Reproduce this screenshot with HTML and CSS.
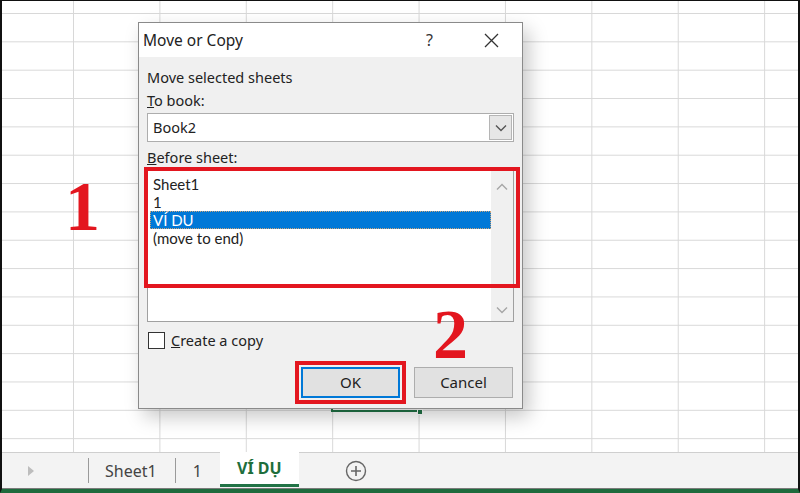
FILE: index.html
```html
<!DOCTYPE html>
<html lang="vi">

<head>
    <meta charset="UTF-8">
    <meta name="viewport" content="width=device-width, initial-scale=1.0">
    <title>Move or Copy</title>
    <link rel="stylesheet" href="styles.css">
</head>

<body>
    <div class="excel">
        <div class="grid">
            <!-- selected cell, mostly hidden under the dialog -->
            <div class="cell-sel"><span class="fill-handle"></span></div>

            <div class="dialog">
                <div class="dlg-title">
                    <span class="dlg-name">Move or Copy</span>
                    <span class="dlg-help">?</span>
                    <span class="dlg-close">
                        <svg width="15" height="15" viewBox="0 0 15 15">
                            <path d="M1 1 L14 14 M14 1 L1 14" stroke="#333" stroke-width="1.3" fill="none"/>
                        </svg>
                    </span>
                </div>
                <div class="dlg-body">
                    <div class="lbl">Move selected sheets</div>
                    <div class="lbl lbl-2"><u>T</u>o book:</div>
                    <div class="combo">
                        <span class="combo-val">Book2</span>
                        <span class="combo-btn">
                            <svg width="12" height="8" viewBox="0 0 12 8">
                                <polyline points="1,1.5 6,6.5 11,1.5" stroke="#555" stroke-width="1.4" fill="none"/>
                            </svg>
                        </span>
                    </div>
                    <div class="lbl lbl-3"><u>B</u>efore sheet:</div>
                    <div class="listbox">
                        <ul class="items">
                            <li>Sheet1</li>
                            <li>1</li>
                            <li class="sel">VÍ DU</li>
                            <li>(move to end)</li>
                        </ul>
                        <div class="vscroll">
                            <svg width="12" height="8" viewBox="0 0 12 8">
                                <polyline points="1,6.5 6,1.5 11,6.5" stroke="#a6a6a6" stroke-width="1.4" fill="none"/>
                            </svg>
                            <svg width="12" height="8" viewBox="0 0 12 8">
                                <polyline points="1,1.5 6,6.5 11,1.5" stroke="#a6a6a6" stroke-width="1.4" fill="none"/>
                            </svg>
                        </div>
                    </div>
                    <label class="check">
                        <span class="box"></span>
                        <span><u>C</u>reate a copy</span>
                    </label>
                    <div class="buttons">
                        <a class="btn btn-ok" href="javascript:;">OK</a>
                        <a class="btn" href="javascript:;">Cancel</a>
                    </div>
                </div>
            </div>

            <!-- red annotations -->
            <div class="frame-list"></div>
            <div class="mark mark-1">1</div>
            <div class="mark mark-2">2</div>
        </div>

        <div class="tabs">
            <div class="tab-nav">
                <svg width="6" height="10" viewBox="0 0 6 10">
                    <polygon points="0,0 6,5 0,10" fill="#bdbdbd"/>
                </svg>
            </div>
            <span class="sep"></span>
            <span class="tab">Sheet1</span>
            <span class="sep"></span>
            <span class="tab tab-one">1</span>
            <span class="tab active">VÍ DỤ</span>
            <span class="tab-add">
                <svg width="22" height="22" viewBox="0 0 22 22">
                    <circle cx="11" cy="11" r="9.5" stroke="#666" stroke-width="1.4" fill="none"/>
                    <path d="M11 6 V16 M6 11 H16" stroke="#666" stroke-width="1.6"/>
                </svg>
            </span>
        </div>
    </div>
</body>

</html>
```

FILE: styles.css
```css
* {
    margin: 0;
    padding: 0;
    box-sizing: border-box;
}

body {
    font-family: "Noto Sans", "Liberation Sans", sans-serif;
    color: #222;
    background: #fff;
}

a {
    text-decoration: none;
    color: #222;
}

ul {
    list-style: none;
}

.excel {
    width: 800px;
    height: 493px;
    border-top: 1px solid #111;
    border-left: 2px solid #111;
    border-right: 2px solid #111;
    border-bottom: 4px solid #1f6b3d;
    overflow: hidden;
}

/* sheet cells */
.grid {
    position: relative;
    height: 451px;
    background-color: #fff;
    background-image: linear-gradient(to right, #d8d8d8 1px, transparent 1px),
        linear-gradient(to bottom, #d8d8d8 1px, transparent 1px);
    background-size: 86.4px 100%, 100% 28.35px;
    background-position: 71px 0, 0 12px;
}

.cell-sel {
    position: absolute;
    left: 329px;
    top: 381px;
    width: 89px;
    height: 30px;
    border: 2px solid #217346;
}

.fill-handle {
    position: absolute;
    right: -5px;
    bottom: -5px;
    width: 6px;
    height: 6px;
    background: #217346;
    border: 1px solid #fff;
}

/* dialog */
.dialog {
    position: absolute;
    left: 136px;
    top: 21px;
    width: 385px;
    height: 387px;
    border: 1px solid #8a8a8a;
    background: #f0f0f0;
    box-shadow: 6px 8px 18px rgba(0, 0, 0, .22);
    display: flex;
    flex-direction: column;
}

.dlg-title {
    height: 35px;
    background: #fff;
    display: flex;
    align-items: center;
    padding-left: 4px;
}

.dlg-name {
    flex: 1;
    font-size: 15.5px;
    color: #222;
}

.dlg-help {
    font-size: 16px;
    color: #333;
    margin-right: 51px;
}

.dlg-close {
    display: flex;
    margin-right: 23px;
}

.dlg-body {
    flex: 1;
    padding: 10px 8px 10px 8px;
    font-size: 14.5px;
    display: flex;
    flex-direction: column;
}

.lbl {
    line-height: 20px;
    height: 20px;
}

.lbl-2 {
    margin-top: 3px;
}

.lbl-3 {
    margin-top: 5px;
}

.combo {
    margin-top: 3px;
    height: 29px;
    border: 1px solid #adadad;
    background: #fff;
    display: flex;
}

.combo-val {
    flex: 1;
    line-height: 27px;
    padding-left: 5px;
}

.combo-btn {
    width: 23px;
    margin: 1px;
    background: #e6e6e6;
    border: 1px solid #b5b5b5;
    display: flex;
    align-items: center;
    justify-content: center;
}

.listbox {
    margin-top: 1px;
    height: 154px;
    border: 1px solid #a0a0a0;
    background: #fff;
    display: flex;
}

.items {
    flex: 1;
    padding: 6px 0 0 2px;
    font-family: Lato, "Noto Sans", sans-serif;
    font-size: 15px;
}

.items li {
    height: 18px;
    line-height: 18px;
    padding-left: 3px;
}

.items li.sel {
    background: #0078d7;
    color: #fff;
    outline: 1px dotted #c9a37a;
    outline-offset: -1px;
}

.vscroll {
    width: 22px;
    background: #f0f0f0;
    display: flex;
    flex-direction: column;
    justify-content: space-between;
    align-items: center;
    padding: 14px 0 7px;
}

.check {
    margin-top: 8px;
    height: 20px;
    display: flex;
    align-items: center;
    gap: 6px;
    padding-left: 1px;
}

.check .box {
    width: 17px;
    height: 17px;
    border: 1px solid #333;
    background: #fff;
}

.buttons {
    margin-top: 17px;
    display: flex;
    justify-content: flex-end;
    gap: 14px;
    padding-right: 1px;
}

.btn {
    display: block;
    width: 99px;
    height: 31px;
    line-height: 29px;
    text-align: center;
    background: #e1e1e1;
    border: 1px solid #adadad;
    font-size: 15px;
}

.btn-ok {
    border: 2px solid #0078d7;
    line-height: 27px;
    outline: 4px solid #e3161f;
    outline-offset: 2px;
}

/* annotations */
.frame-list {
    position: absolute;
    left: 142px;
    top: 166px;
    width: 376px;
    height: 121px;
    border: 4px solid #e3161f;
}

.mark {
    position: absolute;
    font-family: "Liberation Serif", serif;
    font-weight: bold;
    font-size: 70px;
    line-height: 1;
    color: #e3161f;
}

.mark-1 {
    left: 63px;
    top: 171px;
}

.mark-2 {
    left: 431px;
    top: 299px;
}

/* sheet tabs */
.tabs {
    height: 37px;
    background: #f3f3f3;
    border-top: 1px solid #cfcfcf;
    border-bottom: 1px solid #7a7a7a;
    display: flex;
    align-items: center;
    color: #444;
    font-size: 16px;
}

.tab-nav {
    width: 86px;
    padding-left: 26px;
    display: flex;
    align-items: center;
}

.sep {
    width: 1px;
    height: 25px;
    background: #9a9a9a;
}

.tab {
    padding: 0 18px 0 16px;
}

.tab-one {
    padding: 0 18px 0 17px;
}

.tab.active {
    align-self: stretch;
    margin-top: -1px;
    margin-bottom: 1px;
    width: 79px;
    padding: 0;
    background: #fff;
    border-bottom: 3px solid #217346;
    color: #1e6e3c;
    font-weight: bold;
    display: flex;
    align-items: center;
    justify-content: center;
}

.tab-add {
    margin-left: 46px;
    display: flex;
}
```
